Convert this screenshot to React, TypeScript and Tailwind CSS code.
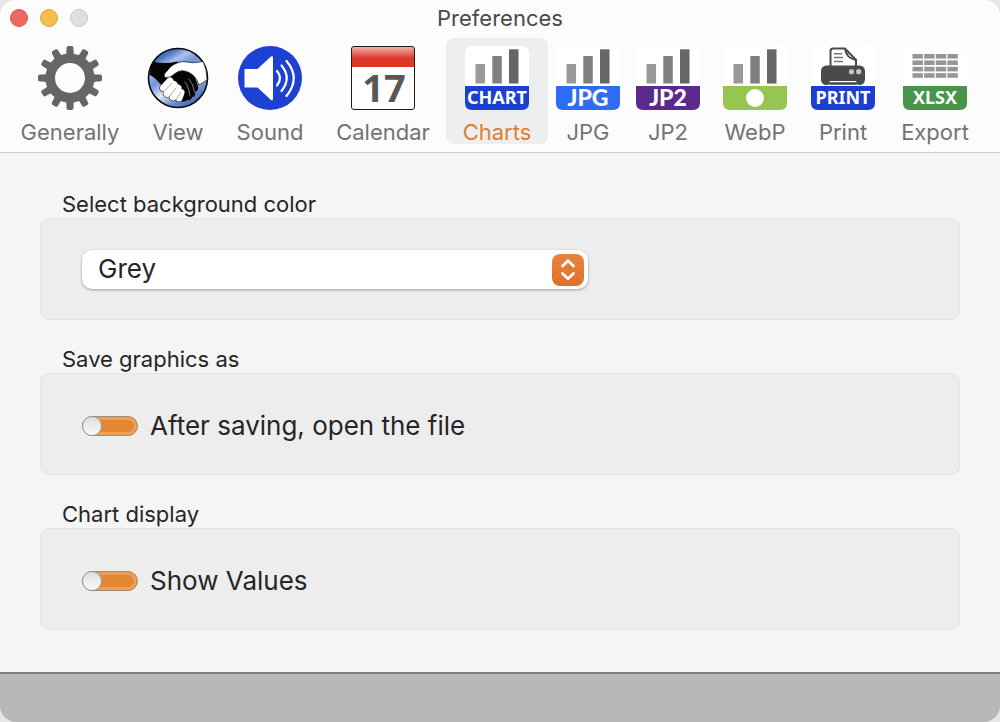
import { useState, type ReactNode } from "react";
import clsx from "clsx";

function GearIcon() {
  const teeth = Array.from({ length: 12 }, (_, i) => i * 30);

  return (
    <svg viewBox="0 0 64 64" className="size-16 shrink-0" aria-hidden="true">
      <g fill="#666666">
        {teeth.map((angle) => (
          <path
            key={angle}
            d="M27 12 Q28.6 8 28.5 4 V2 Q28.5 0 30.5 0 H33.5 Q35.5 0 35.5 2 V4 Q35.4 8 37 12 Z"
            transform={`rotate(${angle} 32 32)`}
          />
        ))}
      </g>
      <circle cx="32" cy="32" r="19.8" fill="none" stroke="#666666" strokeWidth="9.6" />
    </svg>
  );
}

function HandshakeIcon() {
  return (
    <svg viewBox="0 0 64 64" className="size-16 shrink-0" aria-hidden="true">
      <defs>
        <linearGradient id="sky" x1="0.2" y1="0" x2="0.8" y2="1">
          <stop offset="0" stopColor="#3f62b4" />
          <stop offset="0.12" stopColor="#4a6fc0" />
          <stop offset="0.25" stopColor="#a9c0ea" />
          <stop offset="0.4" stopColor="#6f92d6" />
          <stop offset="0.6" stopColor="#dfe8f8" />
          <stop offset="0.78" stopColor="#6d8fd2" />
          <stop offset="1" stopColor="#3658ac" />
        </linearGradient>
      </defs>
      <circle cx="32" cy="32" r="29.5" fill="url(#sky)" stroke="#0b0b0f" strokeWidth="1.6" />
      <path
        d="M7 15.5 Q18 18.5 31 15.5 L46 22 L52 40 Q53 45 49 46 Q50 51 46 51 Q45 55 41 54 Q39 56.5 35 55 L20 42 L14 38 Q11 33 4 29 Q4 21 7 15.5Z"
        fill="#050505"
      />
      <path
        d="M57 15.5 Q61 23 61 34 L53 39 Q50 30 43 26.5 Q35 22.5 29 27.5 Q24 32.5 19 31.5 Q16.5 29 21 25 Q26 17 37 15.5 Q48 18 57 15.5Z"
        fill="#ffffff"
        stroke="#111111"
        strokeWidth="0.7"
      />
      <g strokeLinecap="round" fill="none">
        <g stroke="#111111" strokeWidth="8">
          <path d="M24 35 L17.5 42" />
          <path d="M28 38.5 L21 47.5" />
          <path d="M32 42 L27 51" />
          <path d="M35 46.5 L33 52" />
        </g>
        <g stroke="#ffffff" strokeWidth="7">
          <path d="M24 35 L17.5 42" />
          <path d="M28 38.5 L21 47.5" />
          <path d="M32 42 L27 51" />
          <path d="M35 46.5 L33 52" />
        </g>
        <g stroke="#777777" strokeWidth="0.6">
          <path d="M25.5 37.5 L18 45.5" />
          <path d="M30 42 L23.5 50.5" />
          <path d="M34.5 46.5 L30 54" />
        </g>
        <g stroke="#cfcfcf" strokeWidth="0.6">
          <path d="M39 36 Q43 41 44 50" />
          <path d="M43 33 Q47.5 38 48.5 46" />
        </g>
      </g>
    </svg>
  );
}

function SpeakerIcon() {
  return (
    <svg viewBox="0 0 64 64" className="size-16 shrink-0" aria-hidden="true">
      <circle cx="32" cy="32" r="32" fill="#1e41d4" />
      <path d="M6.5 23 H19.5 L33 10.5 Q35 9.5 35 11.5 V53 Q35 55 33 54 L19.5 41.5 H6.5Z" fill="#ffffff" />
      <g fill="none" stroke="#ffffff" strokeWidth="2.2" strokeLinecap="round">
        <path d="M39 25 Q45 32 39 39.5" />
        <path d="M43.5 19.5 Q54 32 43.5 45" />
        <path d="M48.5 15 Q63 32 48.5 50" />
      </g>
    </svg>
  );
}

function CalendarIcon() {
  return (
    <svg viewBox="0 0 64 64" className="size-16 shrink-0 overflow-visible" aria-hidden="true">
      <defs>
        <linearGradient id="calendarTop" x1="0" y1="0" x2="0" y2="1">
          <stop offset="0" stopColor="#f0b0ac" />
          <stop offset="0.55" stopColor="#dd3a2d" />
          <stop offset="1" stopColor="#df3526" />
        </linearGradient>
      </defs>
      <rect x="0.5" y="0.5" width="63" height="63" rx="2.5" fill="#ffffff" />
      <path d="M1 21 V3 Q1 1 3 1 H61 Q63 1 63 3 V21Z" fill="url(#calendarTop)" />
      <rect x="0.5" y="0.5" width="63" height="63" rx="2.5" fill="none" stroke="#1c1c1c" />
      <text
        x="33"
        y="56"
        textAnchor="middle"
        fontFamily="'Noto Sans', 'Open Sans', sans-serif"
        fontWeight="700"
        fontSize="38"
        fill="#5a5759"
      >
        17
      </text>
    </svg>
  );
}

type FileIconProps = {
  color: string;
  text?: string;
  large?: boolean;
  children: ReactNode;
};

function FileIcon({ color, text, large, children }: FileIconProps) {
  return (
    <svg viewBox="0 0 64 64" className="size-16 shrink-0 overflow-visible" aria-hidden="true">
      <rect width="64" height="64" rx="7" fill="#ffffff" />
      {children}
      <path d="M0 40 H64 V57 Q64 64 57 64 H7 Q0 64 0 57Z" fill={color} />
      {text ? (
        <text
          x="32"
          y={large ? 60 : 58}
          textAnchor="middle"
          fontFamily={
            large
              ? "Lato, sans-serif"
              : "'Noto Sans', 'Open Sans', sans-serif"
          }
          fontWeight={large ? 900 : 700}
          fontSize={large ? 23 : 18}
          fill="#ffffff"
        >
          {text}
        </text>
      ) : (
        <circle cx="32" cy="52" r="9" fill="#ffffff" />
      )}
    </svg>
  );
}

function Bars() {
  return (
    <>
      <rect x="10.5" y="18" width="9.5" height="19.5" fill="#999999" />
      <rect x="27.3" y="10" width="9.5" height="27.5" fill="#808080" />
      <rect x="44" y="3.3" width="9.5" height="34.2" fill="#666666" />
    </>
  );
}

function Printer() {
  return (
    <>
      <path
        d="M19.5 22 V5 Q19.5 2.5 22 2.5 H34 L45 14 V22"
        fill="#ffffff"
        stroke="#4a4a4a"
        strokeWidth="2"
      />
      <path d="M34 2.5 Q35 12 45 14" fill="none" stroke="#4a4a4a" strokeWidth="2" />
      <path
        d="M23 7.7 H31 M23 11.5 H32 M23 15.5 H32"
        stroke="#77727c"
        strokeWidth="1.6"
      />
      <rect x="10" y="19.5" width="44" height="19.5" rx="5.5" fill="#4a4a4a" />
      <circle cx="40.5" cy="25.7" r="2.6" fill="#c4c4c4" />
      <circle cx="47.7" cy="25.7" r="2.6" fill="#c4c4c4" />
      <path d="M16.5 39.5 L19 35 H45 L47.5 39.5Z" fill="#ffffff" />
      <path d="M18.5 37.5 H45.5" stroke="#4a4052" strokeWidth="2.4" strokeLinecap="round" />
    </>
  );
}

function Sheet() {
  const rows = [8, 14.4, 20.8, 27.2];
  const columns = [9.5, 21.2, 32.8, 44.4];

  return (
    <>
      {rows.map((y) =>
        columns.map((x) => (
          <rect key={`${x}-${y}`} x={x} y={y} width="10.4" height="4.6" fill="#949797" />
        ))
      )}
    </>
  );
}

const tabs = [
  { name: "Generally", width: "w-[132px]", icon: <GearIcon /> },
  { name: "View", width: "w-[84px]", icon: <HandshakeIcon /> },
  { name: "Sound", width: "w-[100px]", icon: <SpeakerIcon /> },
  { name: "Calendar", width: "w-[126px]", icon: <CalendarIcon /> },
  {
    name: "Charts",
    width: "w-[102px]",
    icon: (
      <FileIcon color="#1d3fcf" text="CHART">
        <Bars />
      </FileIcon>
    ),
  },
  {
    name: "JPG",
    width: "w-20",
    icon: (
      <FileIcon color="#2e6cf3" text="JPG" large>
        <Bars />
      </FileIcon>
    ),
  },
  {
    name: "JP2",
    width: "w-20",
    icon: (
      <FileIcon color="#5b2a8c" text="JP2" large>
        <Bars />
      </FileIcon>
    ),
  },
  {
    name: "WebP",
    width: "w-[94px]",
    icon: (
      <FileIcon color="#97c552">
        <Bars />
      </FileIcon>
    ),
  },
  {
    name: "Print",
    width: "w-[82px]",
    icon: (
      <FileIcon color="#1d3fcf" text="PRINT">
        <Printer />
      </FileIcon>
    ),
  },
  {
    name: "Export",
    width: "w-[102px]",
    icon: (
      <FileIcon color="#46954a" text="XLSX">
        <Sheet />
      </FileIcon>
    ),
  },
];

type GroupProps = {
  title: string;
  className?: string;
  children: ReactNode;
};

function Group({ title, className, children }: GroupProps) {
  return (
    <section>
      <h2 className="pl-[22px] text-[22px] leading-7 text-[#262626]">
        {title}
      </h2>
      <div
        className={clsx(
          "flex h-[102px] items-center rounded-lg border border-[#e4e4e4] bg-[#ededed] px-[41px]",
          className
        )}
      >
        {children}
      </div>
    </section>
  );
}

type ToggleProps = {
  label: string;
};

function Toggle({ label }: ToggleProps) {
  const [on, setOn] = useState(false);

  return (
    <label className="flex items-center gap-3 text-[26px] leading-8 text-[#262626]">
      <input
        type="checkbox"
        role="switch"
        checked={on}
        onChange={(e) => setOn(e.target.checked)}
        className="flex h-5 w-14 shrink-0 appearance-none items-center rounded-full border border-[#a58a70] bg-[#e38634] shadow-[inset_0_0_0_3px_#ee9e55] before:-ml-px before:size-5 before:rounded-full before:border before:border-[#9a9a9a] before:bg-linear-to-b before:from-[#dedede] before:to-[#fafafa] checked:justify-end"
      />
      {label}
    </label>
  );
}

export default function App() {
  const [active, setActive] = useState("Charts");
  const [color, setColor] = useState("Grey");

  return (
    <div className="min-h-screen bg-[#e6e6e8] font-['Inter',sans-serif]">
      <div className="flex min-h-screen flex-col overflow-hidden rounded-2xl bg-[#f5f5f5]">
        <header className="border-b border-[#cfcfcf] bg-[#fcfcfc] pb-2">
          <div className="grid h-9 grid-cols-[1fr_auto_1fr] items-center px-2.5">
            <div className="flex gap-3">
              <button
                aria-label="Close"
                className="size-[18px] rounded-full border border-[#d9564d] bg-[#ec6a5e]"
              />
              <button
                aria-label="Minimize"
                className="size-[18px] rounded-full border border-[#dba73a] bg-[#f4bd4f]"
              />
              <button
                aria-label="Zoom"
                disabled
                className="size-[18px] rounded-full border border-[#c8c8c8] bg-[#dfdfdf]"
              />
            </div>
            <h1 className="text-[22px] leading-7 text-[#4a4a4a]">
              Preferences
            </h1>
          </div>

          <nav className="flex px-1 pt-0.5">
            {tabs.map((tab) => (
              <button
                key={tab.name}
                onClick={() => setActive(tab.name)}
                className={clsx(
                  "flex h-[106px] flex-col items-center gap-2 rounded-lg pt-2 text-[22px] leading-7",
                  tab.width,
                  tab.name === active
                    ? "bg-[#eeeeee] text-[#dd7e35]"
                    : "text-[#737373]"
                )}
              >
                {tab.icon}
                {tab.name}
              </button>
            ))}
          </nav>
        </header>

        <main className="flex flex-1 flex-col gap-[25px] px-10 pt-[37px] pb-10">
          <Group title="Select background color">
            <div className="relative w-full max-w-[506px]">
              <select
                aria-label="Background color"
                value={color}
                onChange={(e) => setColor(e.target.value)}
                className="block h-[39px] w-full appearance-none rounded-[10px] bg-white pr-12 pl-4 text-[26px] leading-8 text-[#262626] shadow-[0_1px_3px_rgba(0,0,0,0.35)]"
              >
                <option>Grey</option>
                <option>White</option>
                <option>Black</option>
              </select>
              <span className="pointer-events-none absolute top-1 right-1 flex size-8 items-center justify-center rounded-lg bg-linear-to-b from-[#e8843f] to-[#df6f28]">
                <svg viewBox="0 0 32 32" className="size-8" aria-hidden="true">
                  <path
                    d="M10.5 12 L16 6.8 L21.5 12 M10.5 19.6 L16 24.8 L21.5 19.6"
                    fill="none"
                    stroke="#ffffff"
                    strokeWidth="2.8"
                    strokeLinecap="round"
                    strokeLinejoin="round"
                  />
                </svg>
              </span>
            </div>
          </Group>

          <Group title="Save graphics as" className="pt-1">
            <Toggle label="After saving, open the file" />
          </Group>

          <Group title="Chart display" className="pt-1">
            <Toggle label="Show Values" />
          </Group>
        </main>

        <footer className="h-[50px] border-t-2 border-[#7c7c7c] bg-[#b8b8b8]" />
      </div>
    </div>
  );
}
